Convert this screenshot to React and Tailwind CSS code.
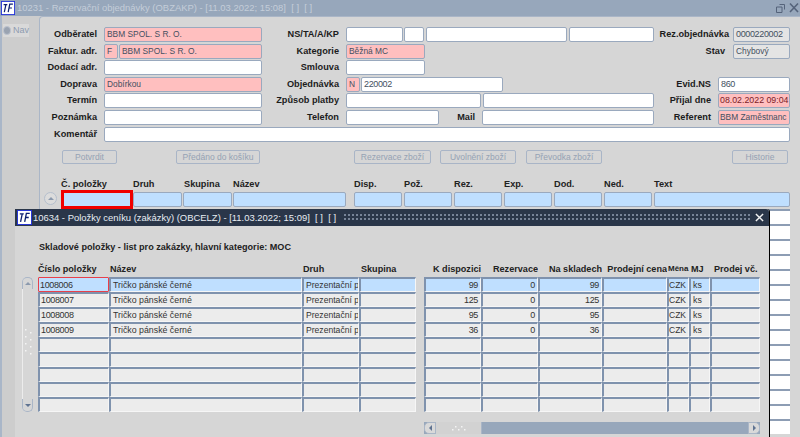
const Field = ({ className = "", children }) => (
  <div className={"h-[15px] shrink-0 border border-[#9aa9be] rounded-[2px] px-[2px] text-[8.4px] leading-[13px] whitespace-nowrap overflow-hidden text-[#44505f] " + className}>{children}</div>
);
const W = "bg-white";
const P = "bg-[#ffbfbf] text-[#5a4a50]";
const Label = ({ className = "", children }) => (
  <div className={"shrink-0 text-right text-[9.2px] font-bold leading-[15px] text-[#1c1c1c] whitespace-nowrap " + className}>{children}</div>
);
const Row = ({ children }) => <div className="flex h-[16.6px]">{children}</div>;
const Btn = ({ className = "", children }) => (
  <div className={"h-[14px] shrink-0 border border-[#a9b5c7] rounded-[2px] text-center text-[8.5px] leading-[13px] text-[#95a2b4] whitespace-nowrap overflow-hidden " + className}>{children}</div>
);

const Logo = ({ className = "" }) => (
  <svg viewBox="0 0 16 16" className={"shrink-0 " + className}>
    <rect x="0.5" y="0.5" width="15" height="15" fill="#fff" stroke="#2230d8" />
    <path d="M3 4.2h4.2M5.6 4.2 3.8 12.6M8.2 12.6 10 3.6h3.6M8.9 8h3.6" fill="none" stroke="#0b1e70" strokeWidth="1.4" />
  </svg>
);

const BlueCell = ({ className = "" }) => (
  <div className={"h-[15px] shrink-0 border border-[#9aa9be] rounded-[2px] bg-[#bfdfff] " + className} />
);

const MainCell = ({ className = "" }) => (
  <div className={"h-[15px] shrink-0 border-t-2 border-[#8d9db4] bg-white " + className} />
);

const rows = [
  { id: "1008006", name: "Tričko pánské černé", druh: "Prezentační p", a: "99", b: "0", c: "99", m: "CZK", j: "ks" },
  { id: "1008007", name: "Tričko pánské černé", druh: "Prezentační p", a: "125", b: "0", c: "125", m: "CZK", j: "ks" },
  { id: "1008008", name: "Tričko pánské černé", druh: "Prezentační p", a: "95", b: "0", c: "95", m: "CZK", j: "ks" },
  { id: "1008009", name: "Tričko pánské černé", druh: "Prezentační p", a: "36", b: "0", c: "36", m: "CZK", j: "ks" },
  {}, {}, {}, {}, {},
];

const Cell = ({ sel, className = "", children }) => (
  <div className={"h-[15px] shrink-0 border-t-2 border-l-2 border-b border-r border-t-[#7f92ad] border-l-[#7f92ad] border-b-[#f6f6f6] border-r-[#f6f6f6] pl-[2px] pr-[2px] text-[8.8px] leading-[12px] text-[#333] whitespace-nowrap overflow-hidden " + (sel ? "bg-[#bfdfff] " : "bg-[#ececec] ") + className}>{children}</div>
);

const Th = ({ className = "", children }) => (
  <div className={"shrink-0 text-[9.1px] font-bold leading-[12px] text-[#222] whitespace-nowrap overflow-hidden " + className}>{children}</div>
);

const Grip = ({ className = "" }) => (
  <svg viewBox="0 0 11 28" className={"shrink-0 " + className}>
    {[[3, 2], [8, 5], [3, 9], [8, 12], [3, 16], [8, 19], [3, 23], [8, 26]].map(([x, y]) => (
      <rect key={x + "-" + y} x={x} y={y} width="1.5" height="1.5" fill="#f4f4f4" />
    ))}
  </svg>
);

const NUM = "!text-[9px] tracking-[-0.35px]";

export default function App() {
  return (
    <div className="relative w-[800px] h-[437px] overflow-hidden flex flex-col bg-[#cdcdcd] font-['Liberation_Sans',Arial,sans-serif]">
      {/* title bar */}
      <div className="h-4 shrink-0 flex items-center bg-[#97a7bb]">
        <Logo className="w-[14px] h-[14px] ml-px" />
        <div className="ml-[2px] text-[9.45px] leading-4 text-[#c4cdd9] whitespace-nowrap">10231 - Rezervační objednávky (OBZAKP) - [11.03.2022; 15:08]&nbsp; [ ]&nbsp; [ ]</div>
        <svg viewBox="0 0 24 12" className="ml-auto mr-px w-6 h-3 text-[#55637a]" fill="none" stroke="currentColor">
          <path d="M4.5 2.5h5v5M1.5 5h5.5v5.5h-5.5z" />
          <path d="M15 1.5l8 8.5M23 1.5l-8 8.5" strokeWidth="1.6" />
        </svg>
      </div>

      <div className="flex flex-1 min-h-0">
        {/* navigation tab */}
        <div className="w-[39px] shrink-0 border-l-2 border-[#a9b6c8] pt-[8px] pl-px">
          <div className="flex items-center w-[26px] h-[13px] bg-[#d9d9d9] text-[9px] text-[#8e9bb0]">
            <span className="w-[9px] h-[9px] rounded-full bg-[#9aa3b1] border border-[#bcc3cf]" />
            <span className="ml-[2px]">Nav</span>
          </div>
        </div>

        {/* form */}
        <div className="flex-1 min-w-0 bg-[#d6d6d6] border-l border-t border-[#aab6c7] rounded-tl-[4px] pt-[10px] pr-[10px]">
          <Row>
            <Label className="w-[57px]">Odběratel</Label>
            <Field className={"ml-[7px] w-[158px] " + P}>BBM SPOL. S R. O.</Field>
            <Label className="w-[77px]">NS/TA/A/KP</Label>
            <Field className={"ml-[7px] w-[57px] " + W} />
            <Field className={"ml-px w-[20px] " + W} />
            <Field className={"ml-[2px] w-[141px] " + W} />
            <Field className={"ml-[2px] w-[85px] " + W} />
            <Label className="ml-auto mr-[4px]">Rez.objednávka</Label>
            <Field className={"w-[57px] bg-[#e4e4e4] text-[#8894a6] " + NUM}>0000220002</Field>
          </Row>
          <Row>
            <Label className="w-[57px]">Faktur. adr.</Label>
            <Field className={"ml-[7px] w-[14px] " + P}>F</Field>
            <Field className={"ml-px w-[143px] " + P}>BBM SPOL. S R. O.</Field>
            <Label className="w-[77px]">Kategorie</Label>
            <Field className={"ml-[7px] w-[79px] " + P}>Běžná MC</Field>
            <Label className="ml-auto mr-[8px]">Stav</Label>
            <Field className="w-[57px] bg-[#e4e4e4]">Chybový</Field>
          </Row>
          <Row>
            <Label className="w-[57px]">Dodací adr.</Label>
            <Field className={"ml-[7px] w-[158px] " + W} />
            <Label className="w-[77px]">Smlouva</Label>
            <Field className={"ml-[7px] w-[79px] " + W} />
          </Row>
          <Row>
            <Label className="w-[57px]">Doprava</Label>
            <Field className={"ml-[7px] w-[158px] " + P}>Dobírkou</Field>
            <Label className="w-[77px]">Objednávka</Label>
            <Field className={"ml-[7px] w-[14px] " + P}>N</Field>
            <Field className={"ml-px w-[142px] text-[#7b8799] " + W + " " + NUM}>220002</Field>
            <Label className="ml-auto mr-[7px]">Evid.NS</Label>
            <Field className={"w-[72px] bg-white text-[#8894a6] " + NUM}>860</Field>
          </Row>
          <Row>
            <Label className="w-[57px]">Termín</Label>
            <Field className={"ml-[7px] w-[158px] " + W} />
            <Label className="w-[77px]">Způsob platby</Label>
            <Field className={"ml-[7px] w-[135px] " + W} />
            <Field className={"ml-[2px] w-[171px] " + W} />
            <Label className="ml-auto mr-[7px]">Přijal dne</Label>
            <Field className="w-[72px] bg-[#ffbfbf] !text-[#7a1c28] !text-[8.8px] !px-px">08.02.2022 09:04</Field>
          </Row>
          <Row>
            <Label className="w-[57px]">Poznámka</Label>
            <Field className={"ml-[7px] w-[158px] " + W} />
            <Label className="w-[77px]">Telefon</Label>
            <Field className={"ml-[7px] w-[93px] " + W} />
            <Label className="w-[36px]">Mail</Label>
            <Field className={"ml-[7px] w-[172px] " + W} />
            <Label className="ml-auto mr-[7px]">Referent</Label>
            <Field className={"w-[72px] !px-px " + P}>BBM Zaměstnanc</Field>
          </Row>
          <Row>
            <Label className="w-[57px]">Komentář</Label>
            <Field className={"ml-[7px] w-[686px] " + W} />
          </Row>

          {/* buttons */}
          <div className="flex mt-[7px]">
            <Btn className="ml-[22px] w-[55px]">Potvrdit</Btn>
            <Btn className="ml-[59px] w-[84px]">Předáno do košíku</Btn>
            <Btn className="ml-[94px] w-[77px]">Rezervace zboží</Btn>
            <Btn className="ml-[9px] w-[76px]">Uvolnění zboží</Btn>
            <Btn className="ml-[10px] w-[76px]">Převodka zboží</Btn>
            <Btn className="ml-[130px] w-[56px]">Historie</Btn>
          </div>

          {/* item table, column heads */}
          <div className="flex mt-[14px] h-[13px] text-[9.2px] font-bold leading-[13px] text-[#222]">
            <div className="ml-[21px] w-[72px] shrink-0">Č. položky</div>
            <div className="w-[51px] shrink-0">Druh</div>
            <div className="w-[49px] shrink-0">Skupina</div>
            <div className="w-[121px] shrink-0">Název</div>
            <div className="w-[50px] shrink-0">Disp.</div>
            <div className="w-[50px] shrink-0">Pož.</div>
            <div className="w-[50px] shrink-0">Rez.</div>
            <div className="w-[50px] shrink-0">Exp.</div>
            <div className="w-[50px] shrink-0">Dod.</div>
            <div className="w-[50px] shrink-0">Ned.</div>
            <div className="shrink-0">Text</div>
          </div>

          {/* filter row */}
          <div className="flex h-[16px] mt-[1px]">
            <div className="ml-[4px] w-[13px] h-[13px] shrink-0 flex items-center justify-center rounded-full border border-[#b5bfcd] bg-[#dcdcdc]">
              <div className="w-0 h-0 border-x-[3px] border-x-transparent border-b-[3px] border-b-[#8b99ad]" />
            </div>
            <div className="ml-[4px] -mt-[2px] w-[72px] h-[19px] shrink-0 border-[3px] border-[#f00000] bg-[#bfdfff]" />
            <BlueCell className="w-[49px]" />
            <BlueCell className="ml-px w-[49px]" />
            <BlueCell className="ml-px w-[113px]" />
            <BlueCell className="ml-[8px] w-[48px]" />
            <BlueCell className="ml-[2px] w-[48px]" />
            <BlueCell className="ml-[2px] w-[48px]" />
            <BlueCell className="ml-[2px] w-[48px]" />
            <BlueCell className="ml-[2px] w-[48px]" />
            <BlueCell className="ml-[2px] w-[48px]" />
            <BlueCell className="ml-[2px] w-[136px]" />
          </div>

          {/* item table, rows mostly under the dialog */}
          {Array.from({ length: 15 }, (_, i) => (
            <div key={i} className={"flex " + (i === 0 ? "pt-px" : "")}>
              <MainCell className="ml-[614px] w-[136px]" />
            </div>
          ))}
        </div>
      </div>

      {/* dialog */}
      <div className="absolute left-[15px] top-[209px] w-[755px] h-[240px] bg-[#d6d6d6] border-r border-black rounded-tr-[3px]">
        <div className="h-[17px] flex items-center bg-[#2a3649] rounded-tr-[3px]">
          <Logo className="w-[15px] h-[15px] ml-[2px]" />
          <div className="ml-px text-[9.45px] leading-4 text-[#e8edf3] whitespace-nowrap">10634 - Položky ceníku (zakázky) (OBCELZ) - [11.03.2022; 15:09]&nbsp; [ ]&nbsp; [ ]</div>
          <div className="ml-[7px] flex-1 h-[9px] bg-[radial-gradient(#7a869a_0.7px,transparent_0.9px)] bg-[length:4px_4px]" />
          <svg viewBox="0 0 10 10" className="mx-[5px] w-[9px] h-[9px]" fill="none" stroke="#f2f2f2" strokeWidth="1.6">
            <path d="M1 1l8 8M9 1l-8 8" />
          </svg>
        </div>

        <div className="ml-[24px] mt-[15px] text-[9.1px] font-bold leading-[12px] text-[#222]">Skladové položky - list pro zakázky, hlavní kategorie: MOC</div>

        <div className="flex mt-[10px] ml-[23px] h-[12px]">
          <Th className="w-[71px]">Číslo položky</Th>
          <Th className="w-[193px] pl-px">Název</Th>
          <Th className="w-[57px] pl-px">Druh</Th>
          <Th className="w-[57px] pl-[2px]">Skupina</Th>
          <Th className="ml-[8px] w-[57px] text-right">K dispozici</Th>
          <Th className="w-[57px] text-right">Rezervace</Th>
          <Th className="w-[64px] text-right">Na skladech</Th>
          <Th className="w-[65px] text-right">Prodejní cena</Th>
          <Th className="w-[22px] pl-px !text-[8px]">Měna</Th>
          <Th className="w-[21px] pl-[2px]">MJ</Th>
          <Th className="w-[50px] pl-[4px]">Prodej vč.</Th>
        </div>

        <div className="flex mt-[2px] ml-[7px]">
          {/* vertical scrollbar */}
          <div className="w-[11px] h-[135px] shrink-0 flex flex-col items-center border-l border-[#ececec] rounded-t-[5px] rounded-b-[5px]">
            <div className="w-[11px] h-[12px] -ml-px flex items-center justify-center rounded-t-[5px] border-t border-x border-[#aab6c7]">
              <div className="w-0 h-0 border-x-[3px] border-x-transparent border-b-[3px] border-b-[#8b99ad]" />
            </div>
            <Grip className="w-[11px] h-[28px] mt-[38px] -ml-px" />
            <div className="mt-auto w-[11px] h-[13px] -ml-px flex items-center justify-center rounded-b-[5px] border-b border-x border-[#aab6c7]">
              <div className="w-0 h-0 border-x-[3px] border-x-transparent border-t-[3px] border-t-[#5f7391]" />
            </div>
          </div>

          <div className="ml-[5px] flex flex-col">
            {rows.map((r, i) => {
              const sel = i === 0;
              return (
                <div key={i} className="flex">
                  <Cell sel={sel} className={"w-[71px] !pl-px " + NUM + " " + (sel ? "!border-[#e8404a] !border-[1px] rounded-[1px] !pl-[2px] pt-px" : "")}>{r.id}</Cell>
                  <Cell sel={sel} className="w-[193px]">{r.name}</Cell>
                  <Cell sel={sel} className="w-[57px] !text-[8.6px]">{r.druh}</Cell>
                  <Cell sel={sel} className="w-[57px]" />
                  <Cell sel={sel} className={"ml-[8px] w-[57px] text-right " + NUM}>{r.a}</Cell>
                  <Cell sel={sel} className={"w-[57px] text-right " + NUM}>{r.b}</Cell>
                  <Cell sel={sel} className={"w-[64px] text-right " + NUM}>{r.c}</Cell>
                  <Cell sel={sel} className="w-[65px]" />
                  <Cell sel={sel} className="w-[22px] !pl-0 !pr-0 !text-[8.5px]">{r.m}</Cell>
                  <Cell sel={sel} className="w-[21px]">{r.j}</Cell>
                  <Cell sel={sel} className="w-[50px]" />
                </div>
              );
            })}
          </div>
        </div>

        {/* horizontal scrollbar */}
        <div className="flex items-center ml-[409px] mt-[10px] w-[336px] h-[12px] bg-[#97a7bb]">
          <div className="w-[12px] h-[12px] shrink-0 flex items-center justify-center bg-[#d9d9d9] border border-[#aab6c7] rounded-l-[5px]">
            <div className="w-0 h-0 border-y-[3px] border-y-transparent border-r-[3px] border-r-[#5f7391]" />
          </div>
          <div className="w-[46px] h-[12px] shrink-0 flex items-center justify-center bg-[#d2d2d2] border-r border-[#aab6c7]">
            <svg viewBox="0 0 16 6" className="w-4 h-[6px]">
              {[[1, 4], [4, 1], [7, 4], [10, 1], [13, 4]].map(([x, y]) => (
                <rect key={x} x={x} y={y} width="1.5" height="1.5" fill="#f4f4f4" />
              ))}
            </svg>
          </div>
          <div className="ml-auto w-[12px] h-[12px] shrink-0 flex items-center justify-center bg-[#d9d9d9] border border-[#aab6c7] rounded-r-[5px]">
            <div className="w-0 h-0 border-y-[3px] border-y-transparent border-l-[3px] border-l-[#5f7391]" />
          </div>
        </div>
      </div>
    </div>
  );
}
